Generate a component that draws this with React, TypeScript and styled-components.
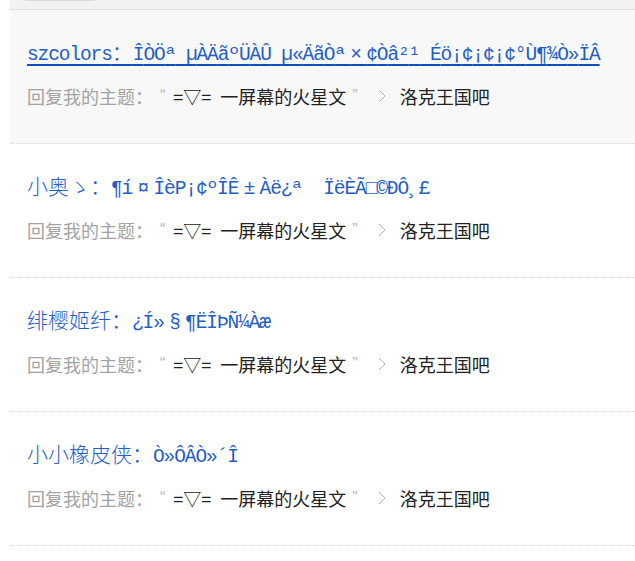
import React from "react";
import styled, { createGlobalStyle } from "styled-components";

const GlobalStyle = createGlobalStyle`
  html, body { margin: 0; padding: 0; background: #ffffff; }
`;

const Page = styled.div`
  padding-left: 10px;
  overflow: hidden;
`;

const TopBar = styled.div`
  height: 9px;
  background: #f2f2f2;
  border-bottom: 1px dotted #cfcfcf;
  display: flex;
  align-items: flex-start;
  padding-left: 15px;
`;

const TabEdge = styled.div`
  width: 70px;
  height: 1px;
  background: #d9d9d9;
`;

const List = styled.ul`
  list-style: none;
  margin: 0;
  padding: 0;
`;

const Item = styled.li<{ $active?: boolean }>`
  padding: 27px 0 35px 17px;
  border-bottom: 1px dotted #d4d4d4;
  background: ${(p) => (p.$active ? "#f8f8f8" : "#ffffff")};
`;

const Title = styled.a<{ $active?: boolean }>`
  display: block;
  width: max-content;
  font-family: "Noto Sans CJK SC", "Liberation Sans", sans-serif;
  font-weight: 300;
  font-size: 21px;
  line-height: 28px;
  height: 28px;
  color: #1f5ec6;
  white-space: nowrap;
  cursor: pointer;
  text-decoration: ${(p) => (p.$active ? "underline" : "none")};
  text-decoration-thickness: 2px;
  text-underline-offset: 4px;
  text-decoration-color: #0b4fc0;
  text-decoration-skip-ink: none;
`;

/* half-width cell = 11.7px glyph advance - 1.1px = 10.6px */
const Mono = styled.span`
  font-family: "Liberation Mono", monospace;
  font-weight: 400;
  font-size: 19.5px;
  letter-spacing: -1.1px;
  line-height: 1;
  white-space: pre;
`;

/* full-width character in the garbled run: two cells (21.2px), glyph centred */
const Wide = styled.span`
  letter-spacing: 4.2px;
  &::before {
    content: " ";
    letter-spacing: -6.4px;
  }
`;

const Sub = styled.div`
  margin-top: 19px;
  display: flex;
  align-items: center;
  font-family: "Noto Sans CJK SC", "Liberation Sans", sans-serif;
  font-size: 18px;
  line-height: 24px;
  white-space: nowrap;
`;

const Label = styled.span`
  color: #a3a3a3;
`;

const Quote = styled.span<{ $side: "open" | "close" }>`
  color: #b5b5b5;
  font-family: "Liberation Sans", sans-serif;
  font-size: 16px;
  margin-left: ${(p) => (p.$side === "open" ? "7px" : "6px")};
`;

const Content = styled.span`
  color: #222222;
`;

const Emote = styled.span`
  margin: 0 9px 0 8px;
`;

const Chevron = styled.svg`
  width: 8px;
  height: 14px;
  margin: 0 14px 0 20px;
  flex: none;
`;

const Forum = styled.span`
  color: #222222;
`;

const WIDE_CHARS = "¤±×§¨";

function Garbled({ text }: { text: string }) {
  return (
    <Mono>
      {Array.from(text).map((c, i) =>
        WIDE_CHARS.includes(c) ? <Wide key={i}>{c}</Wide> : c
      )}
    </Mono>
  );
}

type Reply = {
  name: string;
  nameMono?: boolean;
  text: string;
};

const replies: Reply[] = [
  {
    name: "szcolors",
    nameMono: true,
    text: "ÎÒÖª µÀÄãºÜÀÛ µ«ÄãÒª×¢Òâ²¹ Éö¡¢¡¢¡¢°Ù¶¾Ò»ÏÂ",
  },
  { name: "小奥ゝ", text: "¶í¤ÎèP¡¢ºÎÊ±Àë¿ª  ÏëÈÃ□©ÐÔ¸£" },
  { name: "绯樱姬纤", text: "¿Í»§¶ËÎÞÑ¼Àæ" },
  { name: "小小橡皮侠", text: "Ò»ÔÂÒ»´Î" },
];

export default function App() {
  return (
    <>
      <GlobalStyle />
      <Page>
        <TopBar>
          <TabEdge />
        </TopBar>
        <List>
          {replies.map((r, i) => (
            <Item key={i} $active={i === 0}>
              <Title $active={i === 0}>
                {r.nameMono ? <Mono>{r.name}</Mono> : r.name}：
                <Garbled text={r.text} />
              </Title>
              <Sub>
                <Label>回复我的主题：</Label>
                <Quote $side="open">“</Quote>
                <Content>
                  <Emote>=▽=</Emote>一屏幕的火星文
                </Content>
                <Quote $side="close">”</Quote>
                <Chevron viewBox="0 0 8 14">
                  <polyline
                    points="1,1 7,7 1,13"
                    fill="none"
                    stroke="#b3b3b3"
                    strokeWidth="1"
                  />
                </Chevron>
                <Forum>洛克王国吧</Forum>
              </Sub>
            </Item>
          ))}
        </List>
      </Page>
    </>
  );
}
